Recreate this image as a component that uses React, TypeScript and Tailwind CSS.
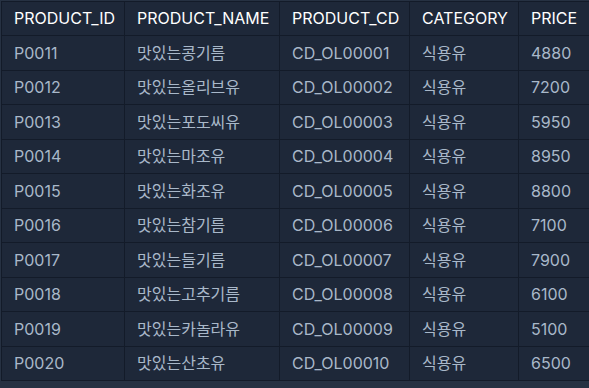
import React from "react";

const rows = [
  ["P0011", "맛있는콩기름", "CD_OL00001", "식용유", "4880"],
  ["P0012", "맛있는올리브유", "CD_OL00002", "식용유", "7200"],
  ["P0013", "맛있는포도씨유", "CD_OL00003", "식용유", "5950"],
  ["P0014", "맛있는마조유", "CD_OL00004", "식용유", "8950"],
  ["P0015", "맛있는화조유", "CD_OL00005", "식용유", "8800"],
  ["P0016", "맛있는참기름", "CD_OL00006", "식용유", "7100"],
  ["P0017", "맛있는들기름", "CD_OL00007", "식용유", "7900"],
  ["P0018", "맛있는고추기름", "CD_OL00008", "식용유", "6100"],
  ["P0019", "맛있는카놀라유", "CD_OL00009", "식용유", "5100"],
  ["P0020", "맛있는산초유", "CD_OL00010", "식용유", "6500"],
];

const headers = ["PRODUCT_ID", "PRODUCT_NAME", "PRODUCT_CD", "CATEGORY", "PRICE"];
const widths = ["w-[123px]", "w-[155px]", "w-[130px]", "w-[109px]", "w-[100px]"];

export default function App() {
  return (
    <div
      className="w-[589px] h-[388px] overflow-hidden bg-[#263142] pl-[1px] pt-[0.5px]"
      style={{ fontFamily: "Inter, 'Noto Sans CJK KR', sans-serif" }}
    >
      <table className="border-collapse table-fixed w-[618px] bg-[#1e2839] text-[16px]">
        <thead>
          <tr>
            {headers.map((h, i) => (
              <th
                key={h}
                className={`${widths[i]} border border-[#131b29] px-[12px] py-[4.75px] leading-[24px] text-left font-normal text-white`}
              >
                {h}
              </th>
            ))}
          </tr>
        </thead>
        <tbody>
          {rows.map((r) => (
            <tr key={r[0]}>
              {r.map((c, i) => (
                <td
                  key={i}
                  className="border border-[#131b29] px-[12px] py-[4.75px] leading-[24px] text-[#a9b8c9] whitespace-nowrap"
                >
                  {c}
                </td>
              ))}
            </tr>
          ))}
        </tbody>
      </table>
    </div>
  );
}
